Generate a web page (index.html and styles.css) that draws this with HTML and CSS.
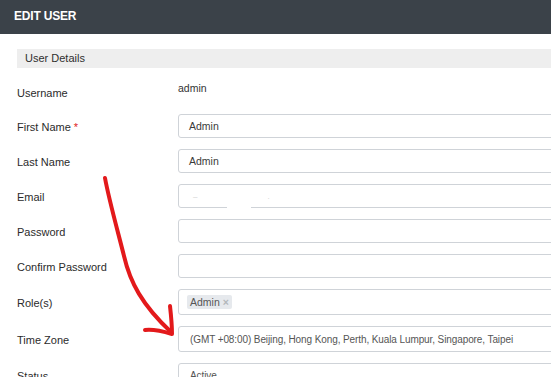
FILE: index.html
```html
<!DOCTYPE html>
<html lang="en">

<head>
  <meta charset="UTF-8" />
  <title>Edit User</title>
  <link rel="stylesheet" href="styles.css">
</head>

<body>
  <header class="page-head">
    <h1>EDIT USER</h1>
  </header>

  <main class="content">
    <div class="section-bar">User Details</div>

    <form class="user-form">
      <div class="row row-static">
        <label>Username</label>
        <div class="static-value">admin</div>
      </div>

      <div class="row">
        <label>First Name <span class="req">*</span></label>
        <div class="field">Admin</div>
      </div>

      <div class="row">
        <label>Last Name</label>
        <div class="field">Admin</div>
      </div>

      <div class="row">
        <label>Email</label>
        <div class="field field-email"><span class="blur">–</span><span class="blur blur-2">.</span><span class="mask"></span></div>
      </div>

      <div class="row">
        <label>Password</label>
        <div class="field"></div>
      </div>

      <div class="row">
        <label>Confirm Password</label>
        <div class="field"></div>
      </div>

      <div class="row row-tall">
        <label>Role(s)</label>
        <div class="field field-tags">
          <span class="tag">Admin <span class="tag-x">×</span></span>
        </div>
      </div>

      <div class="row row-tall">
        <label>Time Zone</label>
        <div class="field field-select">(GMT +08:00) Beijing, Hong Kong, Perth, Kuala Lumpur, Singapore, Taipei</div>
      </div>

      <div class="row">
        <label>Status</label>
        <div class="field field-select">Active</div>
      </div>
    </form>
  </main>

  <!-- hand drawn annotation -->
  <svg class="scribble" width="551" height="377" viewBox="0 0 551 377">
    <path d="M105 178 C 109 200, 118 232, 124 256 C 130 282, 142 305, 171 332" fill="none" stroke="#e3191b" stroke-width="4" stroke-linecap="round" />
    <path d="M170 306 C 171 315, 172 325, 172 334 C 162 331, 153 329, 145 330" fill="none" stroke="#e3191b" stroke-width="4" stroke-linecap="round" stroke-linejoin="round" />
  </svg>
</body>

</html>
```

FILE: styles.css
```css
html,
body {
  overflow: hidden;
}

body {
  margin: 0;
  font-family: 'Liberation Sans', Arial, sans-serif;
  font-size: 11px;
  color: #333;
  background: #fff;
  position: relative;
  width: 551px;
  height: 377px;
}

.page-head {
  background-color: #3b4249;
  height: 34px;
  display: flex;
  align-items: center;
  padding-left: 14px;
  margin-bottom: 15px;
}

.page-head h1 {
  margin: 0;
  color: #fff;
  font-size: 12px;
  font-weight: bold;
  letter-spacing: -0.2px;
  margin-top: -3px;
}

.content {
  padding-left: 17px;
  width: 620px;
}

.section-bar {
  background: #eeeeee;
  height: 19px;
  line-height: 19px;
  padding-left: 8px;
  color: #2e2e2e;
  margin-bottom: 11px;
}

.row {
  display: flex;
  align-items: center;
  height: 24px;
  margin-bottom: 11px;
}

.row label {
  width: 161px;
  flex-shrink: 0;
  padding-top: 2px;
  color: #2b2b2b;
}

.row-static {
  align-items: flex-start;
}

.row-static label {
  padding-top: 8px;
  line-height: 13px;
}

.static-value {
  padding-top: 3px;
  line-height: 13px;
  font-size: 10.5px;
}

.req {
  color: #e02222;
}

.row-tall {
  height: 26px;
}

.field {
  flex: 1;
  height: 100%;
  box-sizing: border-box;
  border: 1px solid #cfd3d8;
  border-radius: 3px;
  padding: 0 10px;
  display: flex;
  align-items: center;
  color: #3a3a3a;
  font-size: 10.5px;
  position: relative;
}

.field-select {
  padding-left: 11px;
  color: #555;
  font-size: 10px;
  letter-spacing: -0.1px;
}

.field-tags {
  padding-left: 8px;
}

.tag {
  background: #e6e9ed;
  border-radius: 2px;
  padding: 1px 3px 1px 3px;
  color: #555;
  line-height: 12px;
  margin-top: -1px;
}

.tag-x {
  color: #b3b7bb;
  font-weight: bold;
}

.blur {
  color: #d0d0d0;
  font-size: 8px;
  margin-left: 4px;
}

.blur-2 {
  margin-left: 70px;
}

.mask {
  position: absolute;
  left: 48px;
  bottom: -2px;
  width: 24px;
  height: 3px;
  background: #fff;
}

.scribble {
  position: absolute;
  left: 0;
  top: 0;
  pointer-events: none;
}
```
